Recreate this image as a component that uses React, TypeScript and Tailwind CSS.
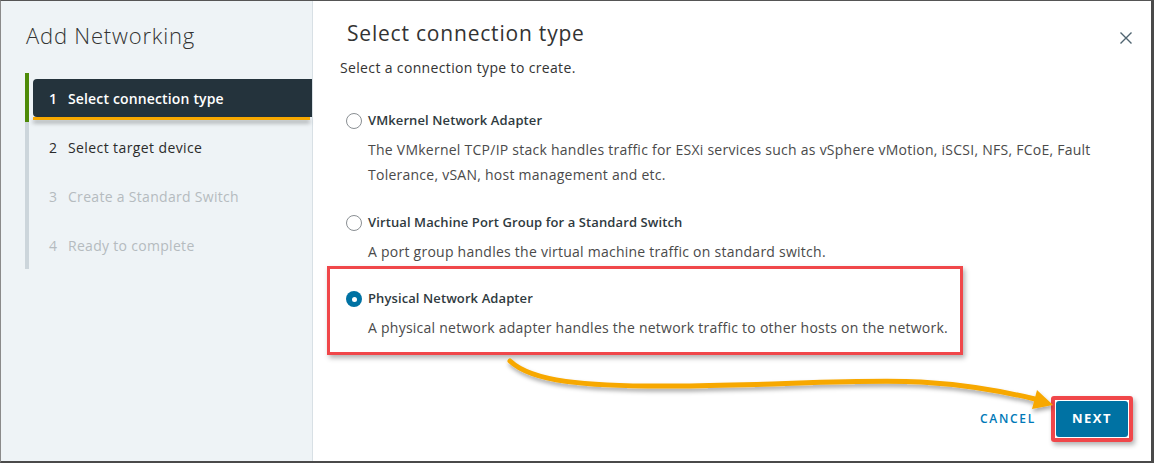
import React from "react";

const font = { fontFamily: '"Open Sans", "Noto Sans", sans-serif' };

function Radio({ checked }: { checked?: boolean }) {
  if (checked) {
    return (
      <span className="flex h-[16px] w-[16px] shrink-0 items-center justify-center rounded-full bg-[#0072a3]">
        <span className="h-[5px] w-[5px] rounded-full bg-white" />
      </span>
    );
  }
  return <span className="block h-[16px] w-[16px] shrink-0 rounded-full border border-[#8a8f93] bg-white" />;
}

function Option({
  label,
  desc,
  checked,
}: {
  label: string;
  desc: React.ReactNode;
  checked?: boolean;
}) {
  return (
    <div>
      <div className="flex h-[20px] items-center gap-[6px]">
        <Radio checked={checked} />
        <span className="text-[13px] font-semibold tracking-[0.1px] text-[#2f3a40]">{label}</span>
      </div>
      <div className="mt-[6px] whitespace-nowrap pl-[22px] text-[14px] leading-[25px] tracking-[0.25px] text-[#4a4a4a]">{desc}</div>
    </div>
  );
}

export default function App() {
  const steps = [
    { n: "1", t: "Select connection type", state: "active" },
    { n: "2", t: "Select target device", state: "next" },
    { n: "3", t: "Create a Standard Switch", state: "disabled" },
    { n: "4", t: "Ready to complete", state: "disabled" },
  ];
  return (
    <div
      style={font}
      className="relative flex h-[463px] w-[1154px] overflow-hidden border-t border-l border-r-[3px] border-b-[2px] border-t-[#555] border-l-[#8a8a8a] border-r-[#4a4a4a] border-b-[#4a4a4a] bg-white"
    >
      {/* Left panel */}
      <div className="flex w-[312px] shrink-0 flex-col border-r border-[#d8e0e5] bg-[#eef3f6] pl-[24px] pt-[20px]">
        <div className="ml-[1px] h-[28px] text-[22px] font-light leading-[28px] tracking-[0.8px] text-[#333]">Add Networking</div>
        <div className="mt-[24px] flex">
          <div className="flex w-[4px] flex-col">
            <div className="h-[49px] bg-[#4d8a08]" />
            <div className="flex-1 bg-[#ccd5db]" />
          </div>
          <div className="flex flex-1 flex-col gap-[11px] pb-[5px] pl-[4px] pt-[6px]">
            {steps.map((s) => (
              <div
                key={s.n}
                className={
                  s.state === "active"
                    ? "relative flex h-[38px] items-center rounded-l-[4px] bg-[#24333c] pl-[16px] text-[14px] font-semibold tracking-[0.15px] text-white"
                    : s.state === "next"
                    ? "flex h-[38px] items-center pl-[16px] text-[14px] tracking-[0.4px] text-[#2b2b2b]"
                    : "flex h-[38px] items-center pl-[16px] text-[14px] tracking-[0.3px] text-[#b5bbbf]"
                }
              >
                <span className="w-[19px]">{s.n}</span>
                <span>{s.t}</span>
                {s.state === "active" && (
                  <span className="absolute bottom-[-3px] left-0 right-[2px] h-[3px] bg-[#f7a800] shadow-[0_3px_4px_rgba(0,0,0,0.35)]" />
                )}
              </div>
            ))}
          </div>
        </div>
      </div>

      {/* Right panel */}
      <div className="flex flex-1 flex-col pl-[27px] pr-[18px] pt-[18px]">
        <div className="flex items-start justify-between">
          <div className="ml-[7px] h-[28px] text-[21px] font-normal leading-[28px] tracking-[0.8px] text-[#333]">
            Select connection type
          </div>
          <svg className="mt-[12px]" width="14" height="14" viewBox="0 0 14 14">
            <path d="M1.5 1.5 L12.5 12.5 M12.5 1.5 L1.5 12.5" stroke="#4f6470" strokeWidth="1.4" fill="none" />
          </svg>
        </div>
        <div className="mt-[12px] h-[18px] text-[14px] leading-[18px] tracking-[0.35px] text-[#333]">
          Select a connection type to create.
        </div>

        <div className="mt-[34px] pl-[6px]">
          <Option
            label="VMkernel Network Adapter"
            desc={
              <>
                The VMkernel TCP/IP stack handles traffic for ESXi services such as vSphere vMotion, iSCSI, NFS, FCoE, Fault
                <br />
                Tolerance, vSAN, host management and etc.
              </>
            }
          />
          <div className="mt-[26px]">
            <Option label="Virtual Machine Port Group for a Standard Switch" desc="A port group handles the virtual machine traffic on standard switch." />
          </div>
        </div>

        <div className="ml-[-13px] mt-[2px] w-[636px] border-[3px] border-[#f0474a] pb-[12px] pl-[16px] pt-[20px] shadow-[2px_3px_5px_rgba(0,0,0,0.3)]">
          <Option
            checked
            label="Physical Network Adapter"
            desc="A physical network adapter handles the network traffic to other hosts on the network."
          />
        </div>

        <div className="mt-auto flex items-center justify-end pb-[19px]">
          <span className="mr-[15px] text-[12px] font-semibold tracking-[1.7px] text-[#0079b8]">CANCEL</span>
          <div className="rounded-[3px] border-[4px] border-[#f0474a] p-[1px] shadow-[2px_3px_5px_rgba(0,0,0,0.3)]">
            <div className="flex h-[36px] w-[72px] items-center justify-center rounded-[3px] bg-[#0072a3] text-[13px] font-bold tracking-[1.5px] text-white">
              NEXT
            </div>
          </div>
        </div>
      </div>

      {/* Annotation arrow */}
      <svg className="pointer-events-none absolute left-0 top-0" width="1154" height="463" viewBox="0 0 1154 463">
        <defs>
          <filter id="sh" x="-5%" y="-50%" width="110%" height="200%">
            <feDropShadow dx="1" dy="3" stdDeviation="2" floodColor="#000" floodOpacity="0.35" />
          </filter>
        </defs>
        <g filter="url(#sh)">
          <path
            d="M509 360 C 530 380, 580 386, 680 385 C 780 384, 860 378, 920 381 C 970 384, 1010 392, 1038 399"
            stroke="#f7a800"
            strokeWidth="5"
            fill="none"
            strokeLinecap="round"
          />
          <polygon points="1036,389 1052,404 1031,408" fill="#f7a800" />
        </g>
      </svg>
    </div>
  );
}
